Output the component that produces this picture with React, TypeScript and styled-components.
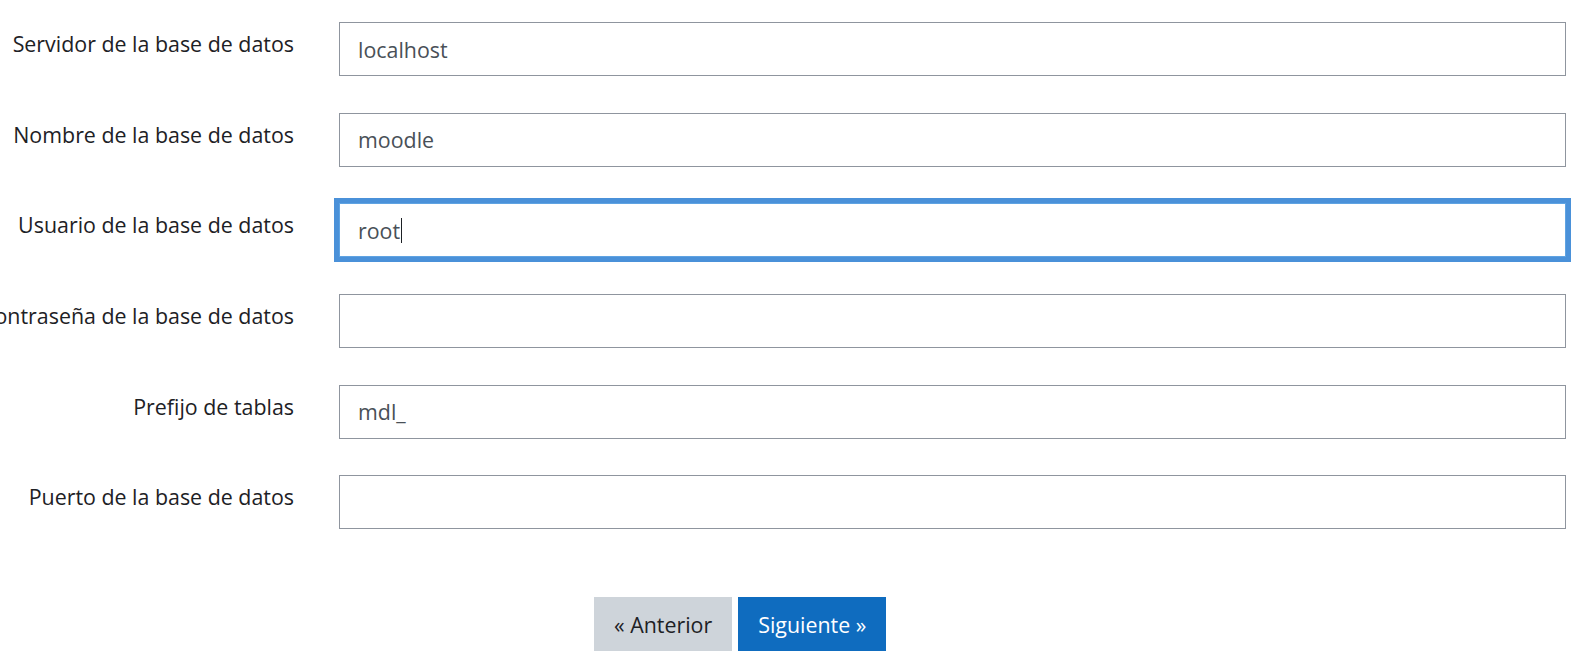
import styled, { createGlobalStyle } from "styled-components";

const Global = createGlobalStyle`
  html, body {
    margin: 0;
    padding: 0;
    background: #fff;
    overflow: hidden;
  }
  body {
    font-family: "Open Sans", "Noto Sans", sans-serif;
    color: #1d2125;
  }
`;

const Form = styled.form`
  padding: 22px 9px 0 0;
  display: flex;
  flex-direction: column;
  gap: 36.7px;
`;

const Row = styled.div`
  display: grid;
  grid-template-columns: 294px 1fr;
  column-gap: 45px;
`;

// labels sit right-aligned and spill out to the left when too long
const Label = styled.label`
  display: flex;
  justify-content: flex-end;
  white-space: nowrap;
  padding-top: 5px;
  font-size: 21.4px;
  line-height: 33.75px;
  color: #1d2125;
`;

const Field = styled.div<{ $focused?: boolean }>`
  height: 54px;
  box-sizing: border-box;
  display: flex;
  align-items: center;
  padding: 0 18px;
  border: 1px solid ${(p) => (p.$focused ? "#5fa3e2" : "#8f959e")};
  box-shadow: ${(p) => (p.$focused ? "0 0 0 5px #4a91d9" : "none")};
  background: #fff;
  font-size: 21.4px;
  color: #495057;
`;

const Caret = styled.span`
  display: inline-block;
  width: 1px;
  height: 25px;
  margin-left: 1px;
  background: #1d2125;
`;

const Buttons = styled.div`
  display: flex;
  gap: 6px;
  margin-top: 31px;
  padding-left: 594px;
`;

const Btn = styled.button<{ $primary?: boolean }>`
  height: 54px;
  padding: 0 19px;
  border: 1px solid ${(p) => (p.$primary ? "#0f6cbf" : "#ced4da")};
  border-radius: 0;
  background: ${(p) => (p.$primary ? "#0f6cbf" : "#ced4da")};
  color: ${(p) => (p.$primary ? "#fff" : "#1d2125")};
  font-family: inherit;
  font-size: 21.4px;
  cursor: pointer;
`;

const fields = [
  { label: "Servidor de la base de datos", value: "localhost" },
  { label: "Nombre de la base de datos", value: "moodle" },
  { label: "Usuario de la base de datos", value: "root", focused: true },
  { label: "Contraseña de la base de datos", value: "" },
  { label: "Prefijo de tablas", value: "mdl_" },
  { label: "Puerto de la base de datos", value: "" },
];

export default function App() {
  return (
    <>
      <Global />
      <Form onSubmit={(e) => e.preventDefault()}>
        {fields.map((f) => (
          <Row key={f.label}>
            <Label>{f.label}</Label>
            <Field $focused={f.focused}>
              <span>{f.value}</span>
              {f.focused && <Caret />}
            </Field>
          </Row>
        ))}
        <Buttons>
          <Btn type="button">« Anterior</Btn>
          <Btn type="submit" $primary>
            Siguiente »
          </Btn>
        </Buttons>
      </Form>
    </>
  );
}
